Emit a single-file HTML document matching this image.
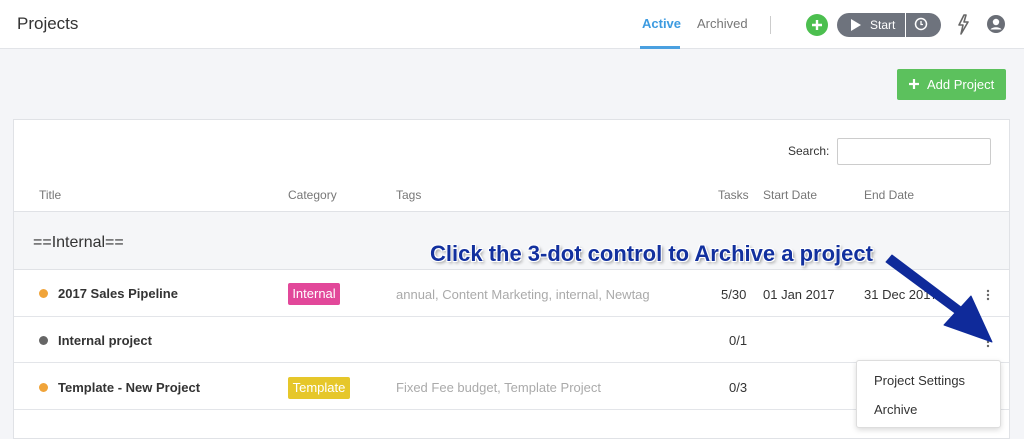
<!DOCTYPE html>
<html><head><style>
*{margin:0;padding:0;box-sizing:border-box}
body{width:1024px;height:432px;overflow:hidden;background:#f4f5f8;font-family:"Liberation Sans",sans-serif;position:relative;color:#333}
.a{position:absolute}
.hdr{left:0;top:0;width:1024px;height:49px;background:#fff;border-bottom:1px solid #e2e4e8}
.card{left:13px;top:119px;width:997px;height:320px;background:#fff;border:1px solid #e0e2e6}
.th{font-size:12px;color:#777;top:188px}
.row{left:14px;width:995px;border-bottom:1px solid #e3e5e9;background:#fff}
.dot{width:9px;height:9px;border-radius:50%}
.nm{font-size:13px;font-weight:bold;color:#333}
.tg{font-size:13px;color:#aaa}
</style></head><body>
<div class="a hdr"></div>
<div class="a" style="left:17px;top:14px;font-size:17px;color:#333">Projects</div>
<div class="a" style="left:642px;top:16px;font-size:13px;color:#3d9be0;font-weight:bold">Active</div>
<div class="a" style="left:640px;top:46px;width:40px;height:3px;background:#4aa0e0"></div>
<div class="a" style="left:697px;top:16px;font-size:13px;color:#777">Archived</div>
<div class="a" style="left:770px;top:16px;width:1px;height:18px;background:#ccc"></div>
<div class="a" style="left:806px;top:14px;width:22px;height:22px;border-radius:50%;background:#4cbf4f"></div>
<svg class="a" style="left:806px;top:14px" width="22" height="22"><path d="M11 6V16M6 11H16" stroke="#fff" stroke-width="2.4"/></svg>
<div class="a" style="left:837px;top:13px;width:104px;height:24px;border-radius:12px;background:#6e737d"></div>
<div class="a" style="left:905px;top:13px;width:1px;height:24px;background:#fff"></div>
<svg class="a" style="left:850px;top:18px" width="12" height="14"><path d="M1 1L11 7L1 13Z" fill="#fff"/></svg>
<div class="a" style="left:870px;top:18px;font-size:12px;color:#fff">Start</div>
<svg class="a" style="left:914px;top:17px" width="14" height="14"><circle cx="7" cy="7" r="5.5" fill="none" stroke="#fff" stroke-width="1.5"/><path d="M7 4V7.5H9" stroke="#fff" stroke-width="1.3" fill="none"/></svg>
<svg class="a" style="left:956px;top:14px" width="14" height="22"><path d="M8 1L3 11H7L5 20L12 8H8L10 1Z" fill="none" stroke="#666" stroke-width="1.6" stroke-linejoin="round"/></svg>
<svg class="a" style="left:987px;top:15px" width="18" height="18"><circle cx="9" cy="9" r="9" fill="#6a6e76"/><circle cx="9" cy="7" r="3.2" fill="#fff"/><path d="M3.5 14.5C5 11.5 13 11.5 14.5 14.5" fill="#fff"/></svg>
<div class="a" style="left:897px;top:69px;width:109px;height:31px;background:#5cc15d;border-radius:2px"></div>
<svg class="a" style="left:908px;top:78px" width="12" height="12"><path d="M6 1V11M1 6H11" stroke="#fff" stroke-width="2.2"/></svg>
<div class="a" style="left:927px;top:77px;font-size:13px;color:#fff">Add Project</div>
<div class="a card"></div>
<div class="a" style="left:788px;top:144px;font-size:12px;color:#333">Search:</div>
<div class="a" style="left:837px;top:138px;width:154px;height:27px;border:1px solid #ccc;border-radius:2px;background:#fff"></div>
<div class="a th" style="left:39px">Title</div>
<div class="a th" style="left:288px">Category</div>
<div class="a th" style="left:396px">Tags</div>
<div class="a th" style="left:718px">Tasks</div>
<div class="a th" style="left:763px">Start Date</div>
<div class="a th" style="left:864px">End Date</div>
<div class="a" style="left:14px;top:211px;width:995px;height:59px;background:#f5f6f8;border-top:1px solid #e0e2e6;border-bottom:1px solid #e0e2e6"></div>
<div class="a" style="left:33px;top:234px;font-size:16px;color:#333">==Internal==</div>
<div class="a row" style="top:270px;height:47px"></div>
<div class="a row" style="top:317px;height:46px"></div>
<div class="a row" style="top:363px;height:47px"></div>
<div class="a dot" style="left:39px;top:289px;background:#f0a43a"></div>
<div class="a nm" style="left:58px;top:286px">2017 Sales Pipeline</div>
<div class="a" style="left:288px;top:283px;width:52px;height:22px;background:#e2489a;border-radius:2px;color:#fff;font-size:13px;line-height:22px;text-align:center">Internal</div>
<div class="a tg" style="left:396px;top:287px">annual, Content Marketing, internal, Newtag</div>
<div class="a" style="left:721px;top:287px;font-size:13px">5/30</div>
<div class="a" style="left:763px;top:287px;font-size:13px">01 Jan 2017</div>
<div class="a" style="left:864px;top:287px;font-size:13px">31 Dec 2017</div>
<div class="a dot" style="left:39px;top:336px;background:#666"></div>
<div class="a nm" style="left:58px;top:333px">Internal project</div>
<div class="a" style="left:729px;top:333px;font-size:13px">0/1</div>
<div class="a dot" style="left:39px;top:383px;background:#f0a43a"></div>
<div class="a nm" style="left:58px;top:380px">Template - New Project</div>
<div class="a" style="left:288px;top:377px;width:62px;height:22px;background:#e6c72a;border-radius:2px;color:#fff;font-size:13px;line-height:22px;text-align:center">Template</div>
<div class="a tg" style="left:396px;top:380px">Fixed Fee budget, Template Project</div>
<div class="a" style="left:729px;top:380px;font-size:13px">0/3</div>
<svg class="a" style="left:986px;top:289px" width="4" height="12"><circle cx="2" cy="2" r="1.2" fill="#666"/><circle cx="2" cy="6" r="1.2" fill="#666"/><circle cx="2" cy="10" r="1.2" fill="#666"/></svg>
<svg class="a" style="left:986px;top:336px" width="4" height="12"><circle cx="2" cy="2" r="1.2" fill="#666"/><circle cx="2" cy="6" r="1.2" fill="#666"/><circle cx="2" cy="10" r="1.2" fill="#666"/></svg>
<div class="a" style="left:856px;top:360px;width:145px;height:68px;background:#fff;border:1px solid #ddd;border-radius:3px;box-shadow:0 2px 6px rgba(0,0,0,.15)"></div>
<div class="a" style="left:874px;top:373px;font-size:13px;color:#333">Project Settings</div>
<div class="a" style="left:874px;top:402px;font-size:13px;color:#333">Archive</div>
<svg class="a" style="left:0;top:0" width="1024" height="432"><path d="M886 262L955 313L944 325L992 342L971 296L961 307L892 255Z" fill="#0f2a9a" stroke="#0f2a9a" stroke-width="1" stroke-linejoin="round"/></svg>
<div class="a" style="left:430px;top:241px;font-size:22px;font-weight:bold;color:#12309e;white-space:nowrap;text-shadow:1px 1px 0 #fff,-1px -1px 0 #fff,1px -1px 0 #fff,-1px 1px 0 #fff,2px 2px 3px rgba(0,0,0,.4)">Click the 3-dot control to Archive a project</div>
</body></html>
